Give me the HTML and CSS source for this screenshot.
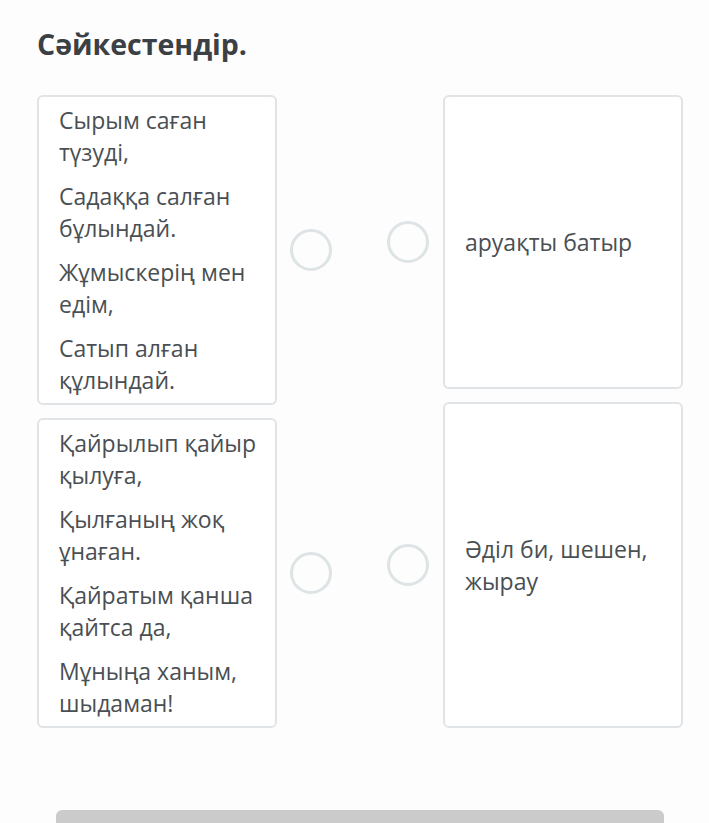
FILE: index.html
```html
<!DOCTYPE html>
<html lang="kk">
<head>
    <meta charset="UTF-8">
    <meta name="viewport" content="width=device-width, initial-scale=1.0">
    <title>Сәйкестендір</title>
    <link rel="stylesheet" href="styles.css">
</head>
<body>
    <div class="main">
        <h1 class="title">Сәйкестендір.</h1>
        <div class="match">
            <div class="side side-left">
                <div class="item">
                    <div class="card">
                        <p>Сырым саған түзуді,</p>
                        <p>Садаққа салған бұлындай.</p>
                        <p>Жұмыскерің мен едім,</p>
                        <p>Сатып алған құлындай.</p>
                    </div>
                    <span class="dot"></span>
                </div>
                <div class="item">
                    <div class="card">
                        <p>Қайрылып қайыр қылуға,</p>
                        <p>Қылғаның жоқ ұнаған.</p>
                        <p>Қайратым қанша қайтса да,</p>
                        <p>Мұныңа ханым, шыдаман!</p>
                    </div>
                    <span class="dot"></span>
                </div>
            </div>
            <div class="side side-right">
                <div class="item">
                    <span class="dot"></span>
                    <div class="card answer answer-first">
                        <p>аруақты батыр</p>
                    </div>
                </div>
                <div class="item">
                    <span class="dot"></span>
                    <div class="card answer answer-second">
                        <p>Әділ би, шешен, жырау</p>
                    </div>
                </div>
            </div>
        </div>
        <div class="footer">
            <button class="btn" type="button"></button>
        </div>
    </div>
</body>
</html>
```

FILE: styles.css
```css
*{
    margin: 0px;
    padding: 0px;
    box-sizing: border-box;
}
body{
    background-color: #fdfdfd;
    font-family: "Open Sans", "Noto Sans", sans-serif;
    color: #4a4f53;
}
.main{
    width: 709px;
    height: 823px;
    overflow: hidden;
    padding: 26px 0px 0px 37px;
}
.title{
    font-size: 28.5px;
    line-height: 36px;
    font-weight: 700;
    color: #3a4044;
    margin-bottom: 33px;
}
.match{
    display: flex;
    gap: 55px;
}
.side{
    display: flex;
    flex-direction: column;
    gap: 13px;
}
.item{
    display: flex;
    align-items: center;
    gap: 13px;
}
.side-right .item{
    gap: 14px;
}
.card{
    width: 240px;
    padding: 7px 12px 7px 20px;
    border: 2px solid #e0e4e7;
    border-radius: 6px;
    background-color: #fff;
    font-size: 23px;
    line-height: 32px;
    display: flex;
    flex-direction: column;
    gap: 12px;
}
.answer{
    justify-content: center;
}
.answer-first{
    height: 294px;
}
.answer-second{
    height: 326px;
}
.dot{
    width: 42px;
    height: 42px;
    border: 3px solid #dee3e6;
    border-radius: 50%;
    flex-shrink: 0;
}
.footer{
    margin-top: 82px;
    padding-left: 19px;
}
.btn{
    width: 608px;
    height: 48px;
    border: none;
    border-radius: 6px;
    background-color: #cbcbcb;
}
```
